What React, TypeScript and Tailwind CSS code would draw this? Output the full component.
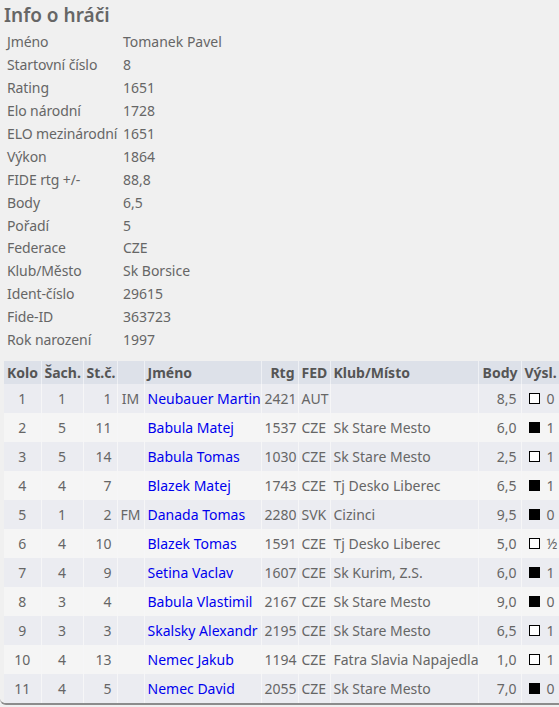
import React from "react";

const info: [string, string][] = [
  ["Jméno", "Tomanek Pavel"],
  ["Startovní číslo", "8"],
  ["Rating", "1651"],
  ["Elo národní", "1728"],
  ["ELO mezinárodní", "1651"],
  ["Výkon", "1864"],
  ["FIDE rtg +/-", "88,8"],
  ["Body", "6,5"],
  ["Pořadí", "5"],
  ["Federace", "CZE"],
  ["Klub/Město", "Sk Borsice"],
  ["Ident-číslo", "29615"],
  ["Fide-ID", "363723"],
  ["Rok narození", "1997"],
];

type Game = {
  kolo: number;
  sach: number;
  stc: number;
  titul: string;
  jmeno: string;
  rtg: number;
  fed: string;
  klub: string;
  body: string;
  white: boolean;
  res: string;
};

const games: Game[] = [
  { kolo: 1, sach: 1, stc: 1, titul: "IM", jmeno: "Neubauer Martin", rtg: 2421, fed: "AUT", klub: "", body: "8,5", white: true, res: "0" },
  { kolo: 2, sach: 5, stc: 11, titul: "", jmeno: "Babula Matej", rtg: 1537, fed: "CZE", klub: "Sk Stare Mesto", body: "6,0", white: false, res: "1" },
  { kolo: 3, sach: 5, stc: 14, titul: "", jmeno: "Babula Tomas", rtg: 1030, fed: "CZE", klub: "Sk Stare Mesto", body: "2,5", white: true, res: "1" },
  { kolo: 4, sach: 4, stc: 7, titul: "", jmeno: "Blazek Matej", rtg: 1743, fed: "CZE", klub: "Tj Desko Liberec", body: "6,5", white: false, res: "1" },
  { kolo: 5, sach: 1, stc: 2, titul: "FM", jmeno: "Danada Tomas", rtg: 2280, fed: "SVK", klub: "Cizinci", body: "9,5", white: false, res: "0" },
  { kolo: 6, sach: 4, stc: 10, titul: "", jmeno: "Blazek Tomas", rtg: 1591, fed: "CZE", klub: "Tj Desko Liberec", body: "5,0", white: true, res: "½" },
  { kolo: 7, sach: 4, stc: 9, titul: "", jmeno: "Setina Vaclav", rtg: 1607, fed: "CZE", klub: "Sk Kurim, Z.S.", body: "6,0", white: false, res: "1" },
  { kolo: 8, sach: 3, stc: 4, titul: "", jmeno: "Babula Vlastimil", rtg: 2167, fed: "CZE", klub: "Sk Stare Mesto", body: "9,0", white: false, res: "0" },
  { kolo: 9, sach: 3, stc: 3, titul: "", jmeno: "Skalsky Alexandr", rtg: 2195, fed: "CZE", klub: "Sk Stare Mesto", body: "6,5", white: true, res: "1" },
  { kolo: 10, sach: 4, stc: 13, titul: "", jmeno: "Nemec Jakub", rtg: 1194, fed: "CZE", klub: "Fatra Slavia Napajedla", body: "1,0", white: true, res: "1" },
  { kolo: 11, sach: 4, stc: 5, titul: "", jmeno: "Nemec David", rtg: 2055, fed: "CZE", klub: "Sk Stare Mesto", body: "7,0", white: false, res: "0" },
];

const th = "h-[23px] px-[3px] font-bold text-[#555] border-r border-[#eef0f4] whitespace-nowrap";
const td = "h-[29px] px-[3px] border-r border-[#f6f6f7] whitespace-nowrap";

export default function App() {
  return (
    <div className="w-[559px] h-[707px] overflow-hidden bg-[#f0f0f0] text-[#666] text-[14px] font-['Noto_Sans',sans-serif]">
      <div className="w-[620px] border-b-2 border-[#8c8c8c] rounded-bl-md pl-[4px]">
        <h1 className="text-[19px] font-semibold leading-[24px] pt-[3px] text-[#666]">Info o hráči</h1>
        <table className="mt-[4px] border-collapse">
          <tbody>
            {info.map(([k, v]) => (
              <tr key={k} className="h-[22.9px] leading-[18px]">
                <td className="w-[119px] pl-[3px] whitespace-nowrap tracking-[-0.1px]">{k}</td>
                <td className="whitespace-nowrap">{v}</td>
              </tr>
            ))}
          </tbody>
        </table>
        <table className="mt-[10px] border-collapse table-fixed w-[614px]">
          <colgroup>
            <col className="w-[37px]" />
            <col className="w-[42px]" />
            <col className="w-[34px]" />
            <col className="w-[27px]" />
            <col className="w-[117px]" />
            <col className="w-[37px]" />
            <col className="w-[32px]" />
            <col className="w-[148px]" />
            <col className="w-[43px]" />
            <col className="w-[97px]" />
          </colgroup>
          <thead>
            <tr className="bg-[#dde1e9]">
              <th className={th + " text-center"}>Kolo</th>
              <th className={th + " text-center"}>Šach.</th>
              <th className={th + " text-center"}>St.č.</th>
              <th className={th}></th>
              <th className={th + " text-left"}>Jméno</th>
              <th className={th + " text-right"}>Rtg</th>
              <th className={th + " text-left"}>FED</th>
              <th className={th + " text-left"}>Klub/Místo</th>
              <th className={th + " text-right"}>Body</th>
              <th className={th + " text-left"}>Výsl.</th>
            </tr>
          </thead>
          <tbody>
            {games.map((g, i) => (
              <tr key={g.kolo} className={i % 2 === 0 ? "bg-[#ebecf1]" : "bg-[#f5f5f5]"}>
                <td className={td + " text-center"}>{g.kolo}</td>
                <td className={td + " text-center"}>{g.sach}</td>
                <td className={td + " text-right pr-[5px]"}>{g.stc}</td>
                <td className={td + " text-center"}>{g.titul}</td>
                <td className={td + " text-[#0000ee]"}>{g.jmeno}</td>
                <td className={td + " text-right"}>{g.rtg}</td>
                <td className={td}>{g.fed}</td>
                <td className={td}>{g.klub}</td>
                <td className={td + " text-right pr-[4px]"}>{g.body}</td>
                <td className={td}>
                  <span className="inline-flex items-center gap-[7px] pl-[4px]">
                    <span
                      className={
                        "inline-block w-[11px] h-[11px] border border-black " +
                        (g.white ? "bg-white" : "bg-black")
                      }
                    />
                    <span>{g.res}</span>
                  </span>
                </td>
              </tr>
            ))}
          </tbody>
        </table>
      </div>
    </div>
  );
}
